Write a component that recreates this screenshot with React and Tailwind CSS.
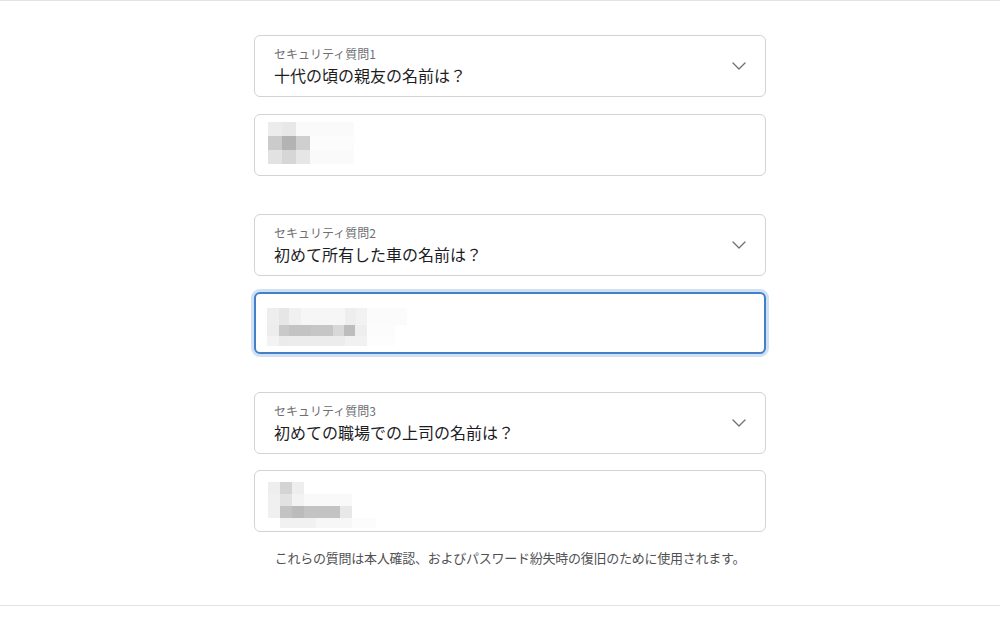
const jp = { fontFamily: '"Noto Sans CJK JP", "Noto Sans", sans-serif' };

function Chevron() {
  return (
    <svg width="14" height="8" viewBox="0 0 14 8" fill="none" className="shrink-0">
      <path d="M1 1l6 6 6-6" stroke="#6e6e73" strokeWidth="1.3" strokeLinecap="round" strokeLinejoin="round" />
    </svg>
  );
}

function QuestionSelect({ label, value }) {
  return (
    <div className="h-[62px] rounded-[6px] border border-[#d2d2d7] bg-white flex items-center pl-[19px] pr-[19px]">
      <div className="flex-1 flex flex-col">
        <span className="text-[12px] leading-[16px] text-[#6e6e73]">{label}</span>
        <span className="text-[16px] leading-[24px] text-[#1d1d1f] mt-[1px]">{value}</span>
      </div>
      <Chevron />
    </div>
  );
}

// blurred answer, drawn as mosaic tiles
function Mosaic({ rows }) {
  return (
    <div className="flex flex-col">
      {rows.map((row, i) => (
        <div key={i} className="flex">
          {row.cells.map((c, j) => (
            <div key={j} style={{ width: c[0], height: row.h, background: c[1] }} />
          ))}
        </div>
      ))}
    </div>
  );
}

function AnswerInput({ focused, rows, pt }) {
  return (
    <div
      className={
        focused
          ? "h-[62px] rounded-[6px] border-2 border-[#4480c8] bg-white shadow-[0_0_0_3px_rgba(120,170,230,0.35)] pl-[11px]"
          : "h-[62px] rounded-[6px] border border-[#d2d2d7] bg-white pl-[13px]"
      }
      style={{ paddingTop: pt }}
    >
      <Mosaic rows={rows} />
    </div>
  );
}

const answer1 = [
  { h: 14, cells: [[14, "#ececec"], [14, "#e8e8e8"], [58, "#fafafa"]] },
  { h: 14, cells: [[14, "#cbcbcb"], [14, "#b3b3b3"], [14, "#cfcfcf"], [44, "#fcfcfc"]] },
  { h: 14, cells: [[14, "#e2e2e2"], [14, "#d6d6d6"], [14, "#e6e6e6"], [44, "#fafafa"]] },
];

const answer2 = [
  { h: 17, cells: [[12, "#eeeeee"], [10, "#e6e6e6"], [12, "#f0f0f0"], [44, "#f6f6f6"], [11, "#eeeeee"], [11, "#f2f2f2"], [40, "#fbfbfb"]] },
  { h: 11, cells: [[12, "#ededed"], [10, "#c9c9c9"], [22, "#c3c3c3"], [22, "#c6c6c6"], [11, "#d8d8d8"], [11, "#bdbdbd"], [12, "#eeeeee"], [28, "#fcfcfc"]] },
  { h: 10, cells: [[12, "#f3f3f3"], [10, "#ebebeb"], [56, "#ececec"], [22, "#f1f1f1"], [28, "#fdfdfd"]] },
];

const answer3 = [
  { h: 12, cells: [[12, "#eeeeee"], [12, "#d4d4d4"], [12, "#eeeeee"]] },
  { h: 12, cells: [[12, "#f0f0f0"], [12, "#e2e2e2"], [12, "#f3f3f3"], [48, "#f9f9f9"]] },
  { h: 12, cells: [[12, "#f0f0f0"], [12, "#c3c3c3"], [12, "#bbbbbb"], [36, "#c3c3c3"], [12, "#e8e8e8"]] },
  { h: 10, cells: [[12, "#ffffff"], [36, "#f1f1f1"], [36, "#f7f7f7"], [24, "#fcfcfc"]] },
];

export default function App() {
  return (
    <div className="w-[1000px] h-[625px] bg-white overflow-hidden flex flex-col" style={jp}>
      <div className="h-[2px] border-t border-[#e3e3e3]" />
      <div className="ml-[254px] w-[512px] pt-[33px] flex flex-col">
        <QuestionSelect label="セキュリティ質問1" value="十代の頃の親友の名前は？" />
        <div className="mt-[17px]">
          <AnswerInput rows={answer1} pt={7} />
        </div>
        <div className="mt-[38px]">
          <QuestionSelect label="セキュリティ質問2" value="初めて所有した車の名前は？" />
        </div>
        <div className="mt-[16px]">
          <AnswerInput focused rows={answer2} pt={14} />
        </div>
        <div className="mt-[38px]">
          <QuestionSelect label="セキュリティ質問3" value="初めての職場での上司の名前は？" />
        </div>
        <div className="mt-[16px]">
          <AnswerInput rows={answer3} pt={11} />
        </div>
        <p className="mt-[16px] text-center text-[13px] leading-[20px] tracking-[-0.25px] text-[#515154]">
          これらの質問は本人確認、およびパスワード紛失時の復旧のために使用されます。
        </p>
      </div>
      <div className="mt-[37px] border-t border-[#e3e3e3]" />
    </div>
  );
}
